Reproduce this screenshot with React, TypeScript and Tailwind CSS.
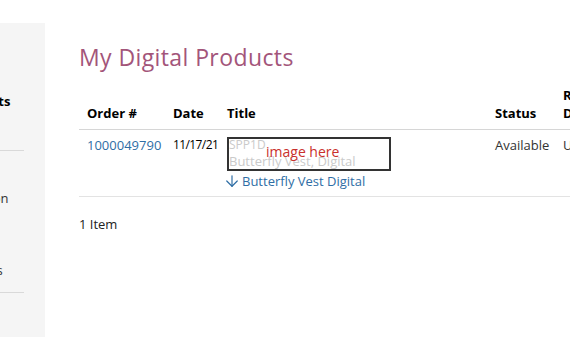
import { ArrowDown } from "lucide-react";

const navTop = ["My Account", "My Digital Products"];
const navBottom = ["Account Information", "My Orders", "Shipping Addresses"];

export default function App() {
  return (
    <div className="flex h-[350px] w-[570px] overflow-hidden bg-white font-['Open_Sans',sans-serif] text-[13px] leading-[18px] text-[#222]">
      {/* Sidebar (cut off at the left edge) */}
      <aside className="shrink-0 pt-[23px]">
        <div className="flex h-[314px] w-[45px] justify-end overflow-hidden bg-[#f5f5f5]">
          <div className="w-[170px] shrink-0 pt-[24px]">
            {navTop.map((item, i) => (
              <div
                key={item}
                className={`flex h-[36px] items-center whitespace-nowrap pl-[9px] ${i === 1 ? "font-bold text-black" : "text-[#333]"}`}
              >
                {item}
              </div>
            ))}
            <div className="mr-[21px] mt-[31px] border-t border-[#d9d9d9]" />
            <div className="mt-[29px]">
              {navBottom.map((item) => (
                <div key={item} className="flex h-[36px] items-center whitespace-nowrap pl-[9px] text-[#333]">
                  {item}
                </div>
              ))}
            </div>
            <div className="mr-[21px] mt-[4px] border-t border-[#d9d9d9]" />
          </div>
        </div>
      </aside>

      {/* Main */}
      <main className="ml-[34px] min-w-0 flex-1 pt-[43px]">
        <h1 className="text-[23px] leading-7 tracking-[0.4px] text-[#a3557a]">My Digital Products</h1>

        <table className="mt-[15px] w-[580px] table-fixed border-collapse">
          <colgroup>
            <col className="w-[86px]" />
            <col className="w-[54px]" />
            <col className="w-[268px]" />
            <col className="w-[68px]" />
            <col className="w-[104px]" />
          </colgroup>
          <thead>
            <tr className="border-b border-[#d6d6d6] align-bottom">
              <th className="pb-[7px] pl-[8px] text-left font-bold text-black">Order #</th>
              <th className="pb-[7px] pl-[8px] text-left font-bold text-black">Date</th>
              <th className="pb-[7px] pl-[8px] text-left font-bold text-black">Title</th>
              <th className="pb-[7px] pl-[8px] text-left font-bold text-black">Status</th>
              <th className="pb-[7px] pl-[8px] text-left font-bold text-black">Remaining Downloads</th>
            </tr>
          </thead>
          <tbody>
            <tr className="border-b border-[#e3e3e3] align-top">
              <td className="pb-[6px] pl-[8px] pt-[6px]">
                <a className="text-[#2f6ea5]">1000049790</a>
              </td>
              <td className="whitespace-nowrap pl-[8px] pt-[6px] text-[12px] tracking-[-0.6px] text-black">11/17/21</td>
              <td className="pb-[6px] pl-[8px] pt-[6px]">
                <div className="relative mt-[1px] h-[34px] w-[164px] overflow-hidden border-2 border-[#333]">
                  <div className="-mt-[3px] whitespace-nowrap leading-[17px] text-[#cacaca]">
                    <div className="text-[12px]">SPP1D</div>
                    <div>Butterfly Vest, Digital</div>
                  </div>
                  <span className="absolute left-[37px] top-[4px] text-[14px] leading-[18px] text-[#c9302c]">image here</span>
                </div>
                <a className="mt-[1px] flex items-center gap-[1px] whitespace-nowrap text-[#2f6ea5]">
                  <ArrowDown size={18} strokeWidth={1.6} className="-ml-[4px] shrink-0" />
                  Butterfly Vest Digital
                </a>
              </td>
              <td className="pl-[8px] pt-[6px] text-[#333]">Available</td>
              <td className="pl-[8px] pt-[6px] text-[#333]">Unlimited</td>
            </tr>
          </tbody>
        </table>

        <p className="mt-[18px] text-[#222]">1 Item</p>
      </main>
    </div>
  );
}
